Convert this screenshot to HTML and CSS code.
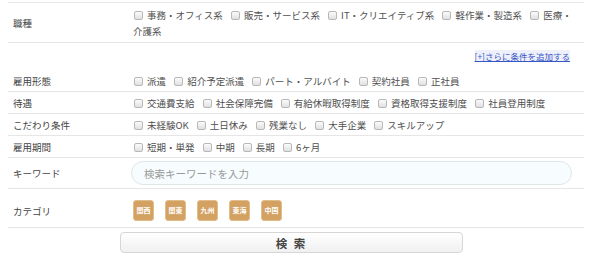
FILE: index.html
```html
<!DOCTYPE html>
<html lang="ja">
<head>
    <meta charset="UTF-8">
    <meta name="viewport" content="width=device-width, initial-scale=1.0">
    <title>求人検索</title>
    <link rel="stylesheet" href="styles.css">
</head>
<body>
    <form class="search-form" onsubmit="return false;">
        <div class="search-table">
            <div class="row row-tall">
                <div class="label">職種</div>
                <div class="value">
                    <label class="chk"><input type="checkbox">事務・オフィス系</label>
                    <label class="chk"><input type="checkbox">販売・サービス系</label>
                    <label class="chk"><input type="checkbox">IT・クリエイティブ系</label>
                    <label class="chk"><input type="checkbox">軽作業・製造系</label>
                    <label class="chk"><input type="checkbox">医療・介護系</label>
                </div>
            </div>

            <div class="more-row">
                <a href="#" class="more-link">[+]さらに条件を追加する</a>
            </div>

            <div class="row">
                <div class="label">雇用形態</div>
                <div class="value">
                    <label class="chk"><input type="checkbox">派遣</label>
                    <label class="chk"><input type="checkbox">紹介予定派遣</label>
                    <label class="chk"><input type="checkbox">パート・アルバイト</label>
                    <label class="chk"><input type="checkbox">契約社員</label>
                    <label class="chk"><input type="checkbox">正社員</label>
                </div>
            </div>

            <div class="row">
                <div class="label">待遇</div>
                <div class="value">
                    <label class="chk"><input type="checkbox">交通費支給</label>
                    <label class="chk"><input type="checkbox">社会保障完備</label>
                    <label class="chk"><input type="checkbox">有給休暇取得制度</label>
                    <label class="chk"><input type="checkbox">資格取得支援制度</label>
                    <label class="chk"><input type="checkbox">社員登用制度</label>
                </div>
            </div>

            <div class="row">
                <div class="label">こだわり条件</div>
                <div class="value">
                    <label class="chk"><input type="checkbox">未経験OK</label>
                    <label class="chk"><input type="checkbox">土日休み</label>
                    <label class="chk"><input type="checkbox">残業なし</label>
                    <label class="chk"><input type="checkbox">大手企業</label>
                    <label class="chk"><input type="checkbox">スキルアップ</label>
                </div>
            </div>

            <div class="row">
                <div class="label">雇用期間</div>
                <div class="value">
                    <label class="chk"><input type="checkbox">短期・単発</label>
                    <label class="chk"><input type="checkbox">中期</label>
                    <label class="chk"><input type="checkbox">長期</label>
                    <label class="chk"><input type="checkbox">6ヶ月</label>
                </div>
            </div>

            <div class="row row-keyword">
                <div class="label">キーワード</div>
                <div class="value">
                    <input type="text" class="keyword" placeholder="検索キーワードを入力">
                </div>
            </div>

            <div class="row row-category">
                <div class="label">カテゴリ</div>
                <div class="value tags">
                    <span class="tag">関西</span>
                    <span class="tag">関東</span>
                    <span class="tag">九州</span>
                    <span class="tag">東海</span>
                    <span class="tag">中国</span>
                </div>
            </div>
        </div>

        <button type="submit" class="search-btn">検 索</button>
    </form>
</body>
</html>
```

FILE: styles.css
```css
body {
    margin: 0;
    background: #fff;
    color: #444;
    font-family: "Noto Sans CJK JP", "Noto Sans", sans-serif;
    font-size: 9.5px;
}

.search-form {
    padding: 2px 10px 0 8px;
}

.search-table {
    border-top: 1px solid #e8e8e8;
}

.row {
    display: grid;
    grid-template-columns: 125px 1fr;
    align-items: center;
    border-bottom: 1px solid #e6e6e6;
    padding: 3px 0 2px;
    line-height: 16px;
}

.row-tall {
    padding: 4px 0 3px;
}

.row-keyword {
    padding: 3px 0 3px;
}

.row-category {
    padding: 11px 0 6px;
}

.label {
    padding-left: 5px;
}

.value {
    padding-right: 10px;
    color: #505050;
}

.chk {
    margin-right: 5px;
}

.chk input {
    appearance: none;
    -webkit-appearance: none;
    display: inline-block;
    width: 9px;
    height: 9px;
    margin: 0 4px 0 1px;
    vertical-align: -1px;
    border: 1px solid #b8b8b8;
    border-radius: 2px;
    background: linear-gradient(#fbfbfb, #e0e0e0);
}

.more-row {
    height: 27px;
    line-height: 14px;
    padding-top: 6px;
    box-sizing: border-box;
    text-align: right;
    padding-right: 14px;
}

.more-link {
    font-size: 8.5px;
    color: #3656c4;
    background: #eef0fb;
    text-decoration: underline;
}

.keyword {
    box-sizing: border-box;
    width: 441px;
    height: 24px;
    margin-left: -2px;
    padding: 0 12px;
    border: 1px solid #dfe6e8;
    border-radius: 12px;
    background: #f7fdfe;
    font-family: inherit;
    font-size: 10.5px;
    color: #444;
    outline: none;
}

.keyword::placeholder {
    color: #999;
}

.tags {
    display: flex;
    gap: 11px;
}

.tag {
    display: inline-flex;
    align-items: center;
    justify-content: center;
    box-sizing: border-box;
    width: 21px;
    height: 21px;
    border: 1px solid #e2bd8c;
    border-radius: 3px;
    background: #d3a263;
    color: #fff;
    font-size: 7px;
    font-weight: bold;
    line-height: 1;
}

.search-btn {
    display: block;
    width: 343px;
    height: 21px;
    margin: 4px 0 0 112px;
    padding: 0;
    border: 1px solid #d6d6d6;
    border-radius: 4px;
    background: linear-gradient(#ffffff, #f0f0f0);
    color: #444;
    font-family: inherit;
    font-size: 11.5px;
    font-weight: bold;
    letter-spacing: 2px;
    cursor: pointer;
}
```
